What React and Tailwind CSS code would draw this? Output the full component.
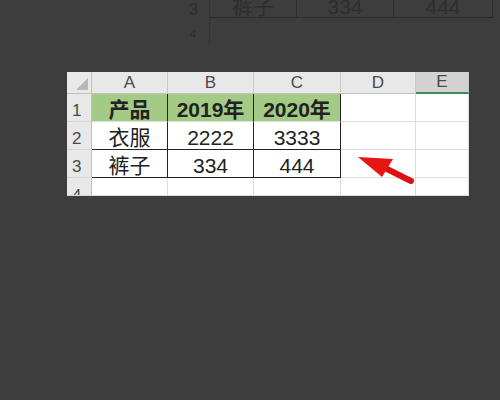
const font = "font-['Liberation_Sans','Noto_Sans_CJK_SC',sans-serif]";

const cols = ["A", "B", "C", "D", "E"];

function HeaderCell({ children, sel }) {
  return (
    <div
      className={`flex items-end justify-center border-r border-[#c8c8c8] text-[17px] leading-none pb-[2px] text-[#4a4a4a] ${
        sel ? "bg-[#d3d3d3] border-b-2 border-b-[#3c8a55]" : "bg-[#e8e8e8] border-b border-b-[#c0c0c0]"
      }`}
    >
      {children}
    </div>
  );
}

function RowHead({ n, cut }) {
  return (
    <div
      className={`flex pl-[5px] bg-[#e8e8e8] border-r border-[#c0c0c0] border-b border-b-[#d6d6d6] text-[17px] leading-none text-[#4a4a4a] overflow-hidden ${
        cut ? "items-start pt-[9px]" : "items-end pb-[2px]"
      }`}
    >
      {n}
    </div>
  );
}

function Cell({ children, green, bold, r, b }) {
  return (
    <div
      className={`flex items-center justify-center pt-[3px] text-[21px] leading-none text-[#222] ${
        green ? "bg-[#a3cb86]" : "bg-white"
      } ${bold ? "font-bold" : ""} ${r ? "border-r border-r-[#222]" : "border-r border-r-[#dcdcdc]"} ${
        b ? "border-b border-b-[#222]" : "border-b border-b-[#dcdcdc]"
      }`}
    >
      {children}
    </div>
  );
}

function Ghost() {
  return (
    <div className="ml-[185px] grid grid-cols-[25px_87px_97px_99px] grid-rows-[18px_27px] text-[#2e2e2e]">
      <div className="flex items-end pl-[4px] text-[16px] leading-none border-r border-[#353535]">3</div>
      <div className="flex items-end justify-center text-[21px] leading-none border-r border-b border-[#2c2c2c]">裤子</div>
      <div className="flex items-end justify-center text-[21px] leading-none border-r border-b border-[#2c2c2c]">334</div>
      <div className="flex items-end justify-center text-[21px] leading-none border-r border-b border-[#2c2c2c]">444</div>
      <div className="flex items-center pl-[5px] pt-[6px] text-[11px] border-r border-[#353535]">4</div>
      <div></div>
      <div></div>
      <div></div>
    </div>
  );
}

function Arrow() {
  return (
    <svg className="absolute left-[288px] top-[79px]" width="62" height="34" viewBox="0 0 62 34">
      <path d="M32 18 L56 30" stroke="#dd1010" strokeWidth="6" strokeLinecap="round" />
      <path d="M3 6 L38 8 L27 26 Z" fill="#e81515" />
    </svg>
  );
}

export default function App() {
  return (
    <div className={`w-[500px] h-[400px] bg-[#3d3d3d] overflow-hidden ${font}`}>
      <Ghost />
      <div className="relative ml-[67px] mt-[27px] w-[402px]">
        <div className="grid grid-cols-[25px_76px_86px_87px_75px_53px] grid-rows-[22px_28px_28px_28px_18px]">
          <div className="relative bg-[#e8e8e8] border-r border-b border-[#c0c0c0]">
            <div className="absolute right-[3px] bottom-[3px] w-0 h-0 border-l-[12px] border-l-transparent border-b-[12px] border-b-[#b8b8b8]"></div>
          </div>
          {cols.map((c) => (
            <HeaderCell key={c} sel={c === "E"}>
              {c}
            </HeaderCell>
          ))}

          <RowHead n="1" />
          <Cell green bold r>产品</Cell>
          <Cell green bold r>2019年</Cell>
          <Cell green bold r>2020年</Cell>
          <Cell />
          <Cell />

          <RowHead n="2" />
          <Cell r b>衣服</Cell>
          <Cell r b>2222</Cell>
          <Cell r b>3333</Cell>
          <Cell />
          <Cell />

          <RowHead n="3" />
          <Cell r b>裤子</Cell>
          <Cell r b>334</Cell>
          <Cell r b>444</Cell>
          <Cell />
          <Cell />

          <RowHead n="4" cut />
          <Cell />
          <Cell />
          <Cell />
          <Cell />
          <Cell />
        </div>
        <Arrow />
      </div>
    </div>
  );
}
